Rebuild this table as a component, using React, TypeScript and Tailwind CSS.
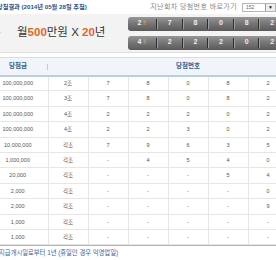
const KR = "font-['Liberation_Sans','Noto_Sans_CJK_KR',sans-serif]";

type Row = [string, string, string[]];

const rows: Row[] = [
  ["100,000,000", "2조", ["7", "8", "0", "8", "2", "2"]],
  ["100,000,000", "3조", ["7", "8", "0", "8", "2", "2"]],
  ["100,000,000", "4조", ["2", "2", "2", "0", "2", "2"]],
  ["100,000,000", "4조", ["2", "2", "3", "0", "2", "2"]],
  ["10,000,000", "각조", ["7", "9", "6", "3", "5", "1"]],
  ["1,000,000", "각조", ["-", "4", "5", "4", "0", "3"]],
  ["20,000", "각조", ["-", "-", "-", "5", "4", "6"]],
  ["2,000", "각조", ["-", "-", "-", "-", "0", "8"]],
  ["2,000", "각조", ["-", "-", "-", "-", "9", "2"]],
  ["1,000", "각조", ["-", "-", "-", "-", "-", "7"]],
  ["1,000", "각조", ["-", "-", "-", "-", "-", "4"]],
];

function NumberBar({ group, digits }: { group: string; digits: string[] }) {
  return (
    <div className="flex h-[14px] w-[186px] shrink-0 items-center rounded-l-[3px] bg-gradient-to-b from-[#969696] via-[#747474] to-[#5a5a5a]">
      <div className="flex w-[28px] items-center justify-center">
        <span className="text-[7px] font-bold text-[#f2f2f2]">{group}</span>
        <span className="ml-[1px] text-[4.5px] text-[#e0b060]">조</span>
      </div>
      {digits.map((d, i) => (
        <div key={i} className="flex h-full w-[25.6px] items-center">
          <div className="h-[10px] w-[1px] bg-[#2c2c2c]" />
          <div className="h-[10px] w-[1px] bg-[#a0a0a0]" />
          <span className="flex-1 text-center text-[7px] font-bold text-[#eeeeee]">
            {d}
          </span>
        </div>
      ))}
    </div>
  );
}

export default function App() {
  return (
    <div className={`relative h-[260px] w-[276px] overflow-hidden bg-white ${KR}`}>
      <div className="flex h-[14px] items-center justify-between">
        <span className="-ml-[3px] whitespace-nowrap text-[6.2px] font-bold text-[#2d4f86]">
          당첨결과 (2014년 05월 28일 추첨)
        </span>
        <div className="flex items-center">
          <span className="whitespace-nowrap text-[7px] tracking-[0.4px] text-[#888]">
            지난회차 당첨번호 바로가기
          </span>
          <div className="ml-[5px] flex h-[9px] w-[34px] items-center border border-[#b5b5b5] bg-white">
            <span className="flex-1 pl-[3px] text-[5px] leading-none text-[#666]">152</span>
            <div className="flex h-full w-[10px] items-center justify-center border-l border-[#999] bg-[#eee]">
              <span className="text-[5px] leading-none text-[#222]">▼</span>
            </div>
          </div>
        </div>
      </div>

      <div className="flex h-[39px] items-center border-b border-[#dedede] bg-[#f3f3f3]">
        <span className="ml-[-2px] w-[19px] shrink-0 text-[9px] text-[#333]">·</span>
        <div className="w-[111px] shrink-0 whitespace-nowrap text-[11.5px] text-[#333]">
          월<span className="font-bold text-[#e8641b]">500</span>만원 X{" "}
          <span className="font-bold text-[#e8641b]">20</span>년
        </div>
        <div className="flex shrink-0 flex-col gap-[5px]">
          <NumberBar group="2" digits={["7", "8", "0", "8", "2", "2"]} />
          <NumberBar group="4" digits={["2", "2", "2", "0", "2", "2"]} />
        </div>
      </div>

      <table className="-ml-[12px] mt-[4px] w-[340px] table-fixed border-collapse">
        <colgroup>
          <col className="w-[60px]" />
          {[0, 1, 2, 3, 4, 5, 6].map((i) => (
            <col key={i} className="w-[40px]" />
          ))}
        </colgroup>
        <thead>
          <tr className="h-[18px] border-t border-b-2 border-t-[#dcdcdc] border-b-[#b9cfe4] bg-[#f1f5f9]">
            <th className="relative text-[6.5px] font-bold text-[#2f5c92]">
              당첨금
              <span className="absolute right-0 top-[6px] h-[6px] w-[1px] bg-[#c9c9c9]" />
            </th>
            <th colSpan={7} className="text-[6.5px] font-bold text-[#2f5c92]">
              당첨번호
            </th>
          </tr>
        </thead>
        <tbody>
          {rows.map(([prize, group, digits], r) => (
            <tr key={r} className="h-[15.4px] border-b border-[#e6e6e6]">
              <td className="border-r border-[#e6e6e6] text-center text-[5.5px] text-[#555]">
                {prize}
              </td>
              <td className="border-r border-[#e6e6e6] text-center text-[5.5px] text-[#555]">
                {group}
              </td>
              {digits.map((d, i) => (
                <td
                  key={i}
                  className="border-r border-[#e6e6e6] text-center text-[5.5px] text-[#555]"
                >
                  {d}
                </td>
              ))}
            </tr>
          ))}
        </tbody>
      </table>
      <div className="-ml-[12px] h-[1px] w-[340px] bg-[#9db6d2]" />
      <div className="-ml-[9px] mt-[2px] whitespace-nowrap text-[6.3px] text-[#3463ad]">
        ※ 지급개시일로부터 1년 (휴일인 경우 익영업일)
      </div>
    </div>
  );
}
